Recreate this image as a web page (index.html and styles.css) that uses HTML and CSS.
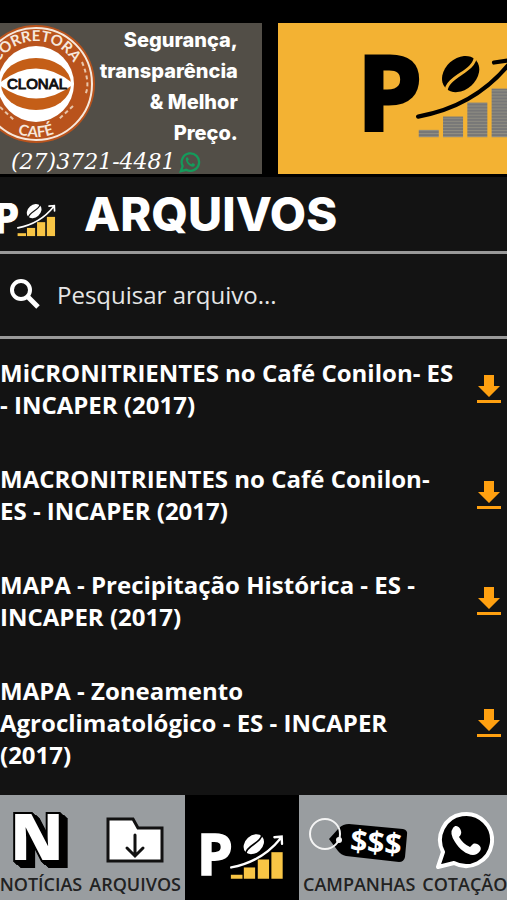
FILE: index.html
```html
<!DOCTYPE html>
<html lang="pt-BR">
<head>
  <meta charset="UTF-8">
  <meta name="viewport" content="width=device-width, initial-scale=1.0">
  <title>Arquivos</title>
  <link rel="stylesheet" href="styles.css">
</head>
<body>
  <!-- Shared icons -->
  <svg class="sprite" aria-hidden="true">
    <symbol id="logo" viewBox="0 0 250 140">
      <text class="logo-letter" x="-12" y="125">P</text>
      <g transform="rotate(-42 159 33)">
        <ellipse cx="159" cy="33" rx="34" ry="26" fill="currentColor"/>
        <path class="logo-seam" d="M122 38 C140 20 178 46 196 28"/>
      </g>
      <path class="logo-arrow" d="M91 103 Q183 86 240 15 M221 12 L243 10 L244 32"/>
      <g class="logo-bars">
        <rect x="90" y="125" width="35" height="12"/>
        <rect x="129" y="103" width="34" height="34"/>
        <rect x="171" y="79" width="34" height="58"/>
        <rect x="212" y="57" width="34" height="80"/>
      </g>
    </symbol>
    <symbol id="download" viewBox="0 0 24 28">
      <path d="M7 0h10v11h6L12 22 1 11h6z M0 25h24v3H0z" fill="currentColor"/>
    </symbol>
  </svg>

  <div class="app">
    <!-- Ads -->
    <section class="banners">
      <a class="banner banner-clonal" href="#">
        <div class="banner-top">
          <svg class="badge" viewBox="0 0 120 118">
            <defs>
              <path id="arcTop" d="M17 59 A43 43 0 0 1 103 59"/>
              <path id="arcBottom" d="M7 59 A53 53 0 0 0 113 59"/>
            </defs>
            <circle cx="60" cy="59" r="59" fill="#b9531c"/>
            <circle cx="60" cy="59" r="56" fill="none" stroke="#f6e8dc" stroke-width="2"/>
            <circle cx="60" cy="59" r="38" fill="#fff"/>
            <ellipse cx="60" cy="59" rx="35" ry="26" fill="#c45e17"/>
            <path d="M22 59 Q60 28 98 59 Q60 88 22 59z" fill="#fff"/>
            <path d="M106 37 Q115 59 109 70 M97 81 L83 94 M24 82 L38 95" fill="none" stroke="#e9c5a9" stroke-width="2" stroke-dasharray="4 3"/>
            <text class="badge-name" x="61" y="64">CLONAL</text>
            <text class="badge-ring"><textPath href="#arcTop" startOffset="50%">CORRETORA</textPath></text>
            <text class="badge-ring"><textPath href="#arcBottom" startOffset="50%">CAFÉ</textPath></text>
          </svg>
          <p class="slogan">Segurança,<br>transparência<br>&amp; Melhor<br>Preço.</p>
        </div>
        <p class="phone">(27)3721-4481
          <svg class="phone-icon" viewBox="0 0 24 24">
            <path d="M2 22 L4 16.500 A9.500 9.500 0 1 1 8 20.500z" fill="none" stroke="#149b5b" stroke-width="2.500"/>
            <path d="M7.500 8 C8 6.500 9.500 6.500 10 7.500 L10.700 9.500 L9.700 11 Q11 13.500 13.500 14.500 L15 13.200 L17 14.200 C18 15 17 17 15.500 17.200 C11.500 17.500 7 12.500 7.500 8z" fill="#149b5b"/>
          </svg>
        </p>
      </a>
      <a class="banner banner-brand" href="#" aria-label="Cotações">
        <svg class="brand-logo" viewBox="0 0 250 140">
          <defs>
            <pattern id="stripes" width="8" height="5" patternUnits="userSpaceOnUse">
              <rect width="8" height="5" fill="#777"/>
              <rect width="8" height="1.500" fill="#969385"/>
            </pattern>
          </defs>
          <text class="logo-letter" x="-12" y="125">P</text>
          <g transform="rotate(-42 159 33)">
            <ellipse cx="159" cy="33" rx="34" ry="26" fill="currentColor"/>
            <path class="logo-seam" d="M122 38 C140 20 178 46 196 28"/>
          </g>
          <path class="logo-arrow" d="M89 103 Q183 86 240 15 M214 14 L243 10 L244 32"/>
          <g fill="url(#stripes)">
            <rect x="90" y="125" width="33" height="12"/>
            <rect x="130" y="103" width="33" height="34"/>
            <rect x="170" y="80" width="33" height="57"/>
            <rect x="210" y="57" width="33" height="80"/>
          </g>
        </svg>
      </a>
    </section>

    <header class="header">
      <svg class="header-logo"><use href="#logo"/></svg>
      <h1 class="title">ARQUIVOS</h1>
    </header>

    <!-- Search -->
    <label class="search">
      <svg class="search-icon" viewBox="0 0 30 30">
        <circle cx="11" cy="11" r="9" fill="none" stroke="#fff" stroke-width="4"/>
        <path d="M17 17 L28 28" stroke="#fff" stroke-width="5"/>
      </svg>
      <input class="search-input" type="text" placeholder="Pesquisar arquivo..." aria-label="Pesquisar arquivo">
    </label>

    <!-- Files -->
    <ul class="files">
      <li class="file">
        <span class="file-name">MiCRONITRIENTES no Café Conilon- ES - INCAPER (2017)</span>
        <a class="file-download" href="#" aria-label="Baixar"><svg><use href="#download"/></svg></a>
      </li>
      <li class="file">
        <span class="file-name">MACRONITRIENTES no Café Conilon- ES - INCAPER (2017)</span>
        <a class="file-download" href="#" aria-label="Baixar"><svg><use href="#download"/></svg></a>
      </li>
      <li class="file">
        <span class="file-name">MAPA - Precipitação Histórica - ES - INCAPER (2017)</span>
        <a class="file-download" href="#" aria-label="Baixar"><svg><use href="#download"/></svg></a>
      </li>
      <li class="file">
        <span class="file-name">MAPA - Zoneamento Agroclimatológico - ES - INCAPER (2017)</span>
        <a class="file-download" href="#" aria-label="Baixar"><svg><use href="#download"/></svg></a>
      </li>
    </ul>

    <!-- Bottom navigation -->
    <nav class="nav">
      <div class="nav-group nav-left">
        <a class="nav-item" href="#">
          <svg class="nav-icon" viewBox="0 0 58 58">
            <text class="news-letter" x="25" y="49">N</text>
          </svg>
          <span>NOTÍCIAS</span>
        </a>
        <a class="nav-item" href="#">
          <svg class="nav-icon" viewBox="0 0 58 58">
            <path d="M2 8 H27 L32 17 H56 V50 H2z" fill="#fff" stroke="#111" stroke-width="3"/>
            <path d="M29 24 V44 M21 37 L29 45 L37 37" fill="none" stroke="#111" stroke-width="3" stroke-linecap="round"/>
          </svg>
          <span>ARQUIVOS</span>
        </a>
      </div>
      <a class="nav-home" href="#" aria-label="Início">
        <svg class="home-logo"><use href="#logo"/></svg>
      </a>
      <div class="nav-group nav-right">
        <a class="nav-item" href="#">
          <svg class="nav-icon nav-icon-wide" viewBox="0 0 100 58">
            <path d="M20 28 L30 17 Q34 13 40 13 L94 18 Q99 19 98 24 L96 46 Q95 51 90 51 L37 45 Q32 44 29 40z" fill="#000"/>
            <circle cx="16" cy="23" r="15" fill="none" stroke="#f4f4f4" stroke-width="2"/>
            <circle cx="30" cy="29" r="3" fill="#f4f4f4"/>
            <text class="tag-price" x="67" y="42" transform="rotate(5 67 32)">$$$</text>
          </svg>
          <span>CAMPANHAS</span>
        </a>
        <a class="nav-item" href="#">
          <svg class="nav-icon" viewBox="0 0 58 58">
            <path d="M2 56 L7 41 A26 26 0 1 1 18 52z" fill="#000" stroke="#fff" stroke-width="4" stroke-linejoin="round"/>
            <path d="M17 17 C20 13 24 16 25 20 Q26 23 23 26 Q27 33 34 36 L37 33 C41 31 47 36 44 40 C38 49 25 41 19 31 Q13 22 17 17z" fill="#fff"/>
          </svg>
          <span>COTAÇÃO</span>
        </a>
      </div>
    </nav>
  </div>
</body>
</html>
```
FILE: styles.css
```css
* {
  margin: 0;
  padding: 0;
  box-sizing: border-box;
}

body {
  font-family: 'Open Sans', 'Noto Sans', sans-serif;
  background: #131313;
  color: #fff;
}

a {
  color: inherit;
  text-decoration: none;
}

.sprite {
  display: none;
}

.app {
  display: flex;
  flex-direction: column;
  min-height: 100vh;
  overflow: hidden;
}

/* Banners */
.banners {
  display: grid;
  grid-template-columns: 8fr 7fr;
  gap: 16px;
  padding: 23px 0 3px;
  background: #000;
}

.banner {
  min-width: 0;
  overflow: hidden;
}

.banner-clonal {
  background: #524e47;
  padding-top: 2px;
}

.banner-top {
  display: flex;
  justify-content: space-between;
  padding-right: 24px;
}

.badge {
  flex: none;
  width: 120px;
  height: 118px;
  margin-left: -24px;
}

.badge-name {
  font: 15px 'Liberation Sans', sans-serif;
  text-anchor: middle;
  fill: #111;
  stroke: #111;
}

.badge-ring {
  font: bold 15px Lato, sans-serif;
  text-anchor: middle;
  fill: #f6e8dc;
}

.slogan {
  font-family: Inter, sans-serif;
  font-size: 20px;
  font-weight: 800;
  line-height: 31px;
  text-align: right;
  white-space: nowrap;
}

.phone {
  display: flex;
  align-items: center;
  gap: 3px;
  padding-left: 11px;
  font-family: 'DejaVu Serif', serif;
  font-size: 22px;
  font-style: italic;
  line-height: 25px;
}

.phone-icon {
  width: 22px;
  height: 22px;
}

.banner-brand {
  --seam: #f3b233;
  background: #f3b233;
  color: #000;
  padding: 31px 0 0 86px;
}

.brand-logo {
  display: block;
  width: 152px;
  height: 85px;
}

/* Logo parts */
.logo-letter {
  font: bold 172px 'Open Sans', sans-serif;
  fill: currentColor;
  stroke: currentColor;
  stroke-width: 5;
}

.logo-seam {
  fill: none;
  stroke: var(--seam, #131313);
  stroke-width: 5;
}

.logo-arrow {
  fill: none;
  stroke: currentColor;
  stroke-width: 7;
  stroke-linecap: round;
}

.logo-bars {
  fill: #f8c545;
}

/* Header */
.header {
  display: flex;
  align-items: center;
  gap: 28px;
  height: 74px;
}

.header-logo {
  width: 60px;
  height: 34px;
  margin: 12px 0 0 -4px;
}

.title {
  font-family: Inter, sans-serif;
  font-size: 47px;
  font-weight: 800;
  line-height: 74px;
}

/* Search */
.search {
  display: flex;
  align-items: center;
  gap: 17px;
  height: 88px;
  padding: 0 10px 2px;
  border-top: 3px solid #999;
  border-bottom: 3px solid #999;
}

.search-icon {
  width: 30px;
  height: 30px;
}

.search-input {
  flex: 1;
  min-width: 0;
  border: none;
  outline: none;
  background: transparent;
  color: #fff;
  font-family: inherit;
  font-size: 24px;
}

.search-input::placeholder {
  color: #e6e6e6;
}

/* Files */
.files {
  flex: 1;
  display: flex;
  flex-direction: column;
  gap: 42px;
  padding: 18px 6px 20px 0;
  list-style: none;
}

.file {
  display: flex;
  align-items: center;
  justify-content: space-between;
  gap: 20px;
}

.file-name {
  font-size: 24px;
  font-weight: 700;
  line-height: 32px;
}

.file-download svg {
  display: block;
  width: 24px;
  height: 28px;
  color: #ffa010;
}

/* Bottom navigation */
.nav {
  display: grid;
  grid-template-columns: 185fr 114fr 208fr;
  height: 105px;
}

.nav-group {
  display: flex;
  gap: 7px;
  min-width: 0;
  padding: 16px 4px 0;
  overflow: hidden;
  background: #999da0;
  color: #222;
}

.nav-left {
  justify-content: flex-end;
}

.nav-item {
  display: flex;
  flex-direction: column;
  align-items: center;
  gap: 3px;
  font-size: 18px;
  font-weight: 600;
  line-height: 24px;
}

.nav-icon {
  width: 58px;
  height: 58px;
}

.nav-icon-wide {
  width: 100px;
}

.news-letter {
  font: 800 64px 'Open Sans', sans-serif;
  text-anchor: middle;
  fill: #fff;
  stroke: #000;
  stroke-width: 4;
  paint-order: stroke;
  filter: drop-shadow(1px 1px 0 #000) drop-shadow(2px 2px 0 #000) drop-shadow(4px 3px 0 #000);
}

.tag-price {
  font: bold 30px 'Open Sans', sans-serif;
  text-anchor: middle;
  fill: #fff;
}

.nav-home {
  --seam: #000;
  display: flex;
  justify-content: center;
  padding-top: 38px;
  background: #000;
}

.home-logo {
  width: 83px;
  height: 47px;
}
```
